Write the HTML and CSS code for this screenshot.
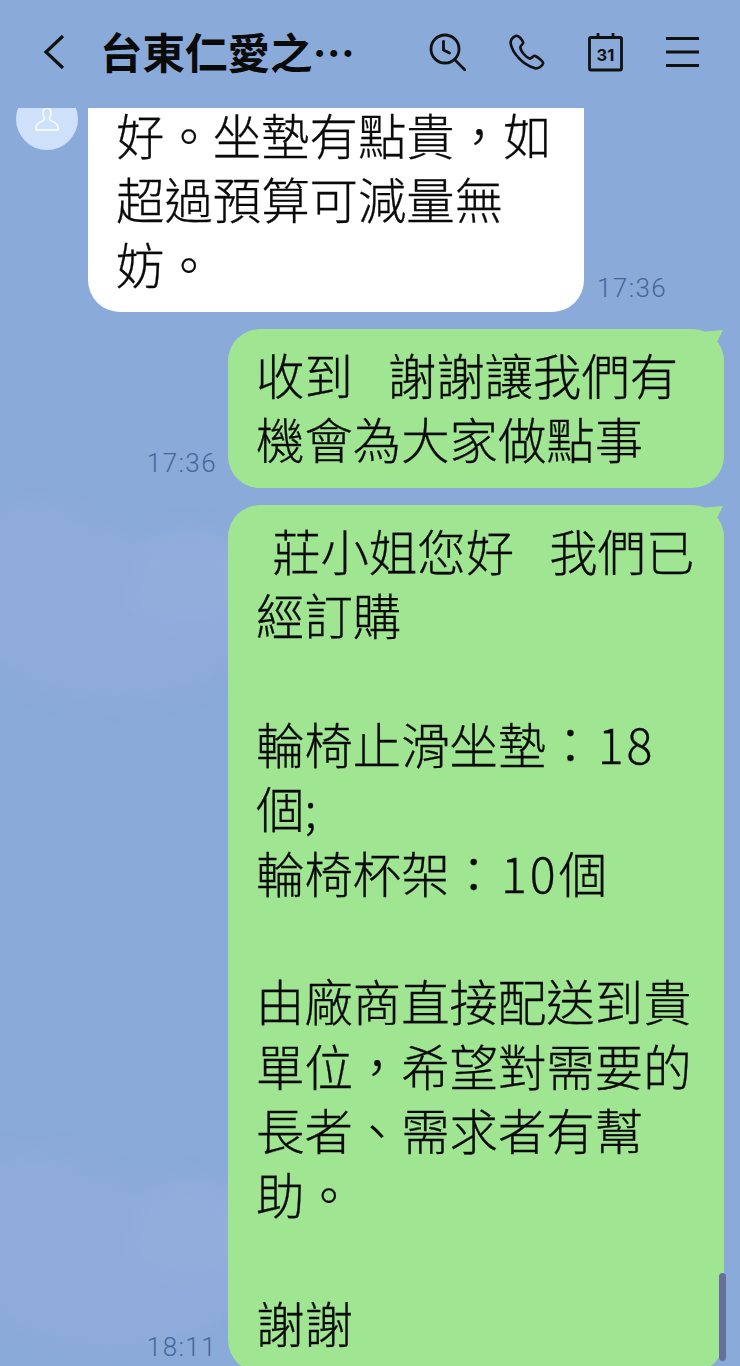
FILE: index.html
```html
<!DOCTYPE html>
<html lang="zh-Hant">
<head>
<meta charset="utf-8">
<title>台東仁愛之家</title>
<link rel="stylesheet" href="styles.css">
</head>
<body>
<div class="app">
  <div class="cloud cloud-a"></div>
  <div class="cloud cloud-b"></div>
  <header class="bar">
    <svg class="back" viewBox="0 0 24 40" width="24" height="40"><path d="M21 4 L4 20 L21 36" fill="none" stroke="#111" stroke-width="3.2"/></svg>
    <div class="title">台東仁愛之…</div>
    <div class="tools">
      <svg width="37" height="38" viewBox="0 0 37 38" fill="none" stroke="#111" stroke-width="2.800" stroke-linecap="round" stroke-linejoin="round"><circle cx="16" cy="16" r="14"/><path d="M26 27 L36 37"/><path d="M14.500 8.500 V17 L20.500 20"/></svg>
      <svg width="36" height="38" viewBox="0 0 38 38" fill="none" stroke="#111" stroke-width="2.800" stroke-linecap="round" stroke-linejoin="round"><path d="M7 2 C3 4 1 7 2 11 C4 20 14 32 27 36 C31 37 35 34 36 31 C36.500 29 30 24 27 23 C25 23 24 26 22 26 C18 25 12 18 12 14 C12 12 15 11 15 9 C14 6 10 1 7 2 Z"/></svg>
      <svg width="35" height="39" viewBox="0 0 35 39" fill="none" stroke="#111" stroke-width="2.800" stroke-linejoin="round"><rect x="1.500" y="4.500" width="32" height="32.500" rx="1.500"/><path d="M10 0 V5 M25 0 V5"/><text x="17.500" y="27.500" text-anchor="middle" class="cal-num">31</text></svg>
      <svg width="33" height="32" viewBox="0 0 33 32" stroke="#111" stroke-width="3"><path d="M0 2.500 H33 M0 16 H33 M0 29.500 H33"/></svg>
    </div>
  </header>
  <main class="chat">
    <div class="row row-in">
      <div class="avatar">
        <svg width="24" height="24" viewBox="0 0 24 24" fill="none" stroke="#f4f8ff" stroke-width="1.800"><path d="M8 6 C8 2.500 10 1 12 1 C14 1 16 2.500 16 6 C16 9 14.500 10.500 14.500 12 C14.500 14 22.500 15 23 20 L23 23 H1 L1 20 C1.500 15 9.500 14 9.500 12 C9.500 10.500 8 9 8 6 Z"/></svg>
      </div>
      <div class="bubble bubble-in">好。坐墊有點貴&#65292;如
超過預算可減量無
妨。</div>
      <time class="stamp">17:36</time>
    </div>
    <div class="row row-out">
      <time class="stamp">17:36</time>
      <div class="bubble bubble-out">收到   謝謝讓我們有
機會為大家做點事</div>
    </div>
    <div class="row row-out">
      <time class="stamp">18:11</time>
      <div class="bubble bubble-out">&#8196;莊小姐您好   我們已
經訂購

輪椅止滑坐墊&#65306;<span class="num">18</span>
個;
輪椅杯架&#65306;<span class="num">10</span>個

由廠商直接配送到貴
單位&#65292;希望對需要的
長者、需求者有幫
助。

謝謝</div>
    </div>
  </main>
  <div class="scrollbar"></div>
</div>
</body>
</html>
```
FILE: styles.css
```css
* { box-sizing: border-box; }
html, body { margin: 0; height: 100%; }
body { overflow: hidden; }
.app {
  position: relative;
  width: 740px;
  height: 1366px;
  overflow: hidden;
  background: #8aaad9;
  font-family: "Noto Sans CJK TC", "Noto Sans", sans-serif;
  color: #0a0a0a;
  display: flex;
  flex-direction: column;
}
.cloud {
  position: absolute;
  left: -20px;
  width: 270px;
  height: 210px;
  filter: blur(10px);
  background:
    radial-gradient(ellipse 55px 55px at 55px 45px, #8fabdb 96%, transparent),
    radial-gradient(ellipse 45px 40px at 115px 60px, #8fabdb 96%, transparent),
    radial-gradient(ellipse 70px 50px at 210px 75px, #92addc 96%, transparent),
    radial-gradient(ellipse 135px 75px at 135px 120px, #8fabdb 96%, transparent);
}
.cloud-a { top: 505px; }
.cloud-b { top: 1155px; }
.bar {
  position: relative;
  flex: none;
  height: 108px;
  display: flex;
  align-items: center;
  padding: 0 41px 4px 42px;
  background: #8aaad9;
  z-index: 2;
}
.back { flex: none; margin-right: 34px; }
.title {
  flex: 1;
  font-size: 42.500px;
  font-weight: 700;
  line-height: 48px;
  white-space: nowrap;
  position: relative;
  bottom: 1px;
}
.tools { display: flex; align-items: center; gap: 43px; }
.cal-num { font: 700 16.500px "Inter", sans-serif; fill: #111; stroke: none; }
.chat {
  flex: none;
  position: relative;
  display: flex;
  flex-direction: column;
  gap: 17px;
  padding: 0 16px;
  margin-top: -6px;
}
.row { display: flex; align-items: flex-end; }
.row-out { justify-content: flex-end; }
.row-out .stamp { margin: 0 11px 9px 0; }
.row-in .stamp { margin: 0 0 8px 13px; }
.stamp { font: 300 26px/32px "Roboto", sans-serif; color: #46669a; letter-spacing: 1.400px; }
.avatar {
  flex: none;
  align-self: flex-start;
  width: 62px;
  height: 62px;
  margin: -14px 10px 0 0;
  border-radius: 50%;
  background: #cfe0fa;
  display: flex;
  align-items: center;
  justify-content: center;
}
.bubble {
  width: 496px;
  padding: 13px 20px 17.300px 28px;
  border-radius: 32px;
  font-size: 48.400px;
  font-weight: 300;
  line-height: 64.330px;
  word-spacing: 1px;
  white-space: pre;
  -webkit-text-stroke: 0.3px #0a0a0a;
  position: relative;
}
.num { margin-left: 3px; letter-spacing: 3px; }
.bubble-in { background: #fff; padding-top: 0; padding-bottom: 17px; border-top-left-radius: 0; border-top-right-radius: 0; }
.bubble-out { background: #9fe592; }
.bubble-out::after {
  content: "";
  position: absolute;
  right: 0;
  top: 0;
  width: 24px;
  height: 16px;
  background: #9fe592;
  clip-path: polygon(0 3px, 23px 1px, 17px 13px, 0 13px);
}
.scrollbar {
  position: absolute;
  right: 14px;
  top: 1273px;
  width: 7px;
  height: 88px;
  border-radius: 4px;
  background: #67709a;
}
```
